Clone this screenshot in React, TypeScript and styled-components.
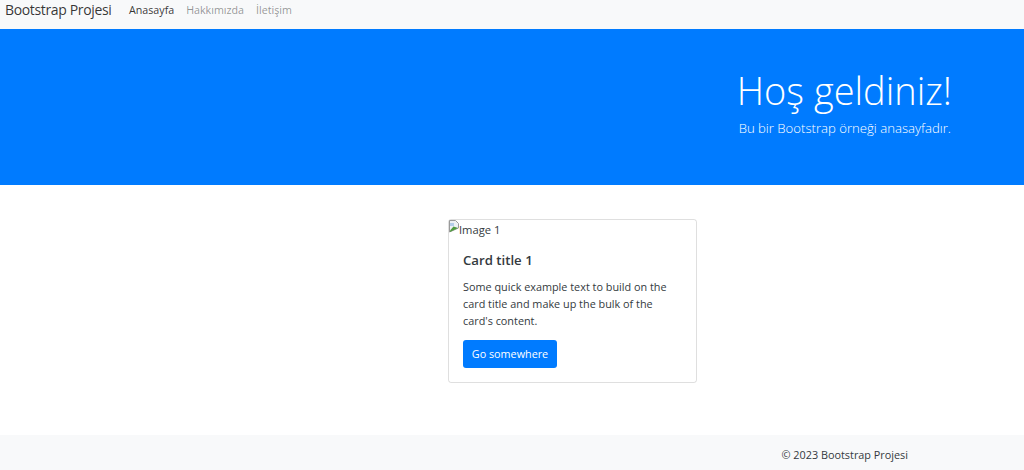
import React from 'react'
import styled, { createGlobalStyle } from 'styled-components'

const GlobalStyle = createGlobalStyle`
  html, body {
    margin: 0;
    padding: 0;
    background: #fff;
  }
  body {
    font-family: "Open Sans", "Noto Sans", "Liberation Sans", sans-serif;
    font-size: 12px;
    line-height: 18px;
    color: #212529;
  }
  * {
    box-sizing: border-box;
  }
`

const Page = styled.div`
  display: flex;
  flex-direction: column;
  height: 470px;
  overflow: hidden;
`

const Navbar = styled.nav`
  display: flex;
  align-items: center;
  height: 29px;
  padding: 0 5px 9px;
  flex: none;
  background: #f8f9fa;
`

const Brand = styled.a`
  width: 124px;
  flex: none;
  font-size: 14px;
  letter-spacing: -0.35px;
  color: rgba(0, 0, 0, 0.8);
  white-space: nowrap;
`

const NavList = styled.ul`
  display: flex;
  gap: 12px;
  margin: 0;
  padding: 0;
  list-style: none;
`

const NavLink = styled.a<{ $active?: boolean }>`
  font-size: 10.7px;
  color: ${(p) => (p.$active ? 'rgba(0, 0, 0, 0.8)' : 'rgba(0, 0, 0, 0.42)')};
`

const Hero = styled.header`
  display: flex;
  flex-direction: column;
  align-items: flex-end;
  flex: none;
  height: 156px;
  padding: 35px 73px 0 0;
  background: #007bff;
  color: #fff;
`

const HeroTitle = styled.h1`
  margin: 0 -1px 0 0;
  font-size: 38px;
  font-weight: 300;
  line-height: 52px;
`

const HeroText = styled.p`
  margin: 3px 0 0;
  font-size: 13.15px;
  font-weight: 300;
  line-height: 19px;
`

const Main = styled.main`
  display: flex;
  justify-content: center;
  flex: 1;
  padding: 34px 0 0 121px;
`

const Card = styled.article`
  width: 249px;
  height: 164px;
  border: 1px solid rgba(0, 0, 0, 0.125);
  border-radius: 3px;
`

const BrokenImage = styled.div`
  display: flex;
  align-items: flex-start;
  height: 18px;
  color: #343a40;
  font-size: 11.2px;
  line-height: 19px;
`

const BrokenIcon = styled.svg`
  flex: none;
  width: 10px;
  height: 13px;
`

const CardBody = styled.div`
  padding: 13px 14px 0;
`

const CardTitle = styled.h5`
  margin: 0 0 8px;
  font-size: 13.2px;
  font-weight: 600;
  line-height: 19px;
  color: #343a40;
`

const CardText = styled.p`
  margin: 0 0 11px;
  font-size: 10.85px;
  line-height: 17px;
  color: #343a40;
`

const Button = styled.a`
  display: inline-flex;
  align-items: center;
  justify-content: center;
  width: 94px;
  height: 28px;
  border-radius: 3px;
  background: #007bff;
  color: #fff;
  font-size: 10.8px;
`

const Footer = styled.footer`
  display: flex;
  justify-content: flex-end;
  align-items: center;
  flex: none;
  height: 35px;
  padding: 4px 116px 0 0;
  background: #f8f9fa;
  font-size: 10.85px;
  color: #343a40;
`

export default function App() {
  return (
    <Page>
      <GlobalStyle />
      <Navbar>
        <Brand>Bootstrap Projesi</Brand>
        <NavList>
          <li>
            <NavLink $active>Anasayfa</NavLink>
          </li>
          <li>
            <NavLink>Hakkımızda</NavLink>
          </li>
          <li>
            <NavLink>İletişim</NavLink>
          </li>
        </NavList>
      </Navbar>
      <Hero>
        <HeroTitle>Hoş geldiniz!</HeroTitle>
        <HeroText>Bu bir Bootstrap örneği anasayfadır.</HeroText>
      </Hero>
      <Main>
        <Card>
          <BrokenImage>
            <BrokenIcon viewBox="0 0 10 13">
              <path d="M0.5 0.5H6.5L9.5 3.5V8L0.5 12Z" fill="#eef1f4" stroke="#9a9a9a" />
              <path d="M1 3H5V6H1Z" fill="#b4cdea" />
              <path d="M1 10.5L4.5 6.5L7.5 7.5L9 8L1 12Z" fill="#4f9a3f" />
            </BrokenIcon>
            Image 1
          </BrokenImage>
          <CardBody>
            <CardTitle>Card title 1</CardTitle>
            <CardText>
              Some quick example text to build on the card title and make up the bulk of the card's content.
            </CardText>
            <Button>Go somewhere</Button>
          </CardBody>
        </Card>
      </Main>
      <Footer>© 2023 Bootstrap Projesi</Footer>
    </Page>
  )
}
